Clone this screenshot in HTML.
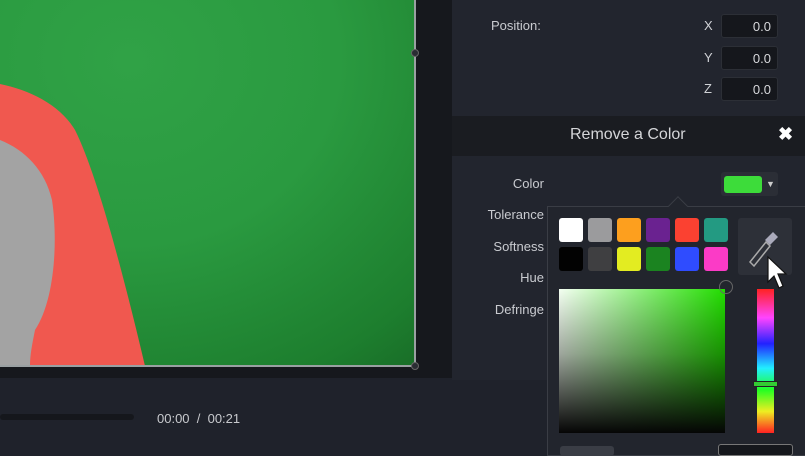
<!DOCTYPE html>
<html><head><style>
body{margin:0;width:805px;height:454px;overflow:hidden;background:#1f222b;font-family:"Liberation Sans",sans-serif;position:relative}
div{position:absolute;box-sizing:border-box}
.lbl{color:#c9cbd0;font-size:13px;text-align:right;width:120px;left:424px}
.inp{left:721px;width:57px;height:24px;background:#15171c;border:1px solid #2c2f36;border-radius:3px;color:#d8d9dc;font-size:13px;text-align:right;padding:4px 6px 0 0}
.ax{left:704px;color:#d0d2d6;font-size:13px}
.sw{width:24px;height:24px;border-radius:3px}
</style></head><body>
<div style="left:0;top:0;width:452px;height:378px;background:#16181d"></div>
<div style="left:0;top:0;width:415px;height:366px;background:radial-gradient(ellipse 520px 460px at 130px 60px,#30a246 0%,#2a9a40 40%,#1d7e2e 75%,#145a20 100%)"></div>
<svg style="position:absolute;left:0;top:0" width="415" height="366"><path d="M0 84 C30 90 60 105 75 130 C95 170 120 260 145 366 L0 366 Z" fill="#f0584f"/><path d="M0 140 C25 150 45 170 52 200 C58 240 55 300 35 330 C32 345 30 355 30 366 L0 366 Z" fill="#a3a3a3"/></svg>
<div style="left:414px;top:0;width:2px;height:367px;background:#9aa0a2"></div>
<div style="left:0;top:365px;width:416px;height:2px;background:#9aa0a2"></div>
<div style="left:411px;top:49px;width:8px;height:8px;border-radius:50%;border:1px solid #666;background:#2a2d33"></div>
<div style="left:411px;top:362px;width:8px;height:8px;border-radius:50%;border:1px solid #666;background:#2a2d33"></div>
<div style="left:0;top:414px;width:134px;height:6px;background:#15171c;border-radius:3px"></div>
<div style="left:157px;top:411px;color:#c8cace;font-size:13px">00:00 &nbsp;/ &nbsp;00:21</div>
<div style="left:452px;top:0;width:353px;height:380px;background:#22252e"></div>
<div style="left:491px;top:18px;color:#c9cbd0;font-size:13px">Position:</div>
<div class="ax" style="top:18px">X</div><div class="inp" style="top:14px">0.0</div>
<div class="ax" style="top:50px">Y</div><div class="inp" style="top:46px">0.0</div>
<div class="ax" style="top:81px">Z</div><div class="inp" style="top:77px">0.0</div>
<div style="left:452px;top:116px;width:353px;height:40px;background:#1a1c21"></div>
<div style="left:570px;top:126px;color:#d4d5d8;font-size:16px">Remove a Color</div>
<div style="left:778px;top:124px;color:#fff;font-size:18px;font-weight:bold">✖</div>
<div class="lbl" style="top:176px">Color</div>
<div class="lbl" style="top:207px">Tolerance</div>
<div class="lbl" style="top:239px">Softness</div>
<div class="lbl" style="top:270px">Hue</div>
<div class="lbl" style="top:302px">Defringe</div>
<div style="left:721px;top:172px;width:57px;height:24px;background:#2b2e36;border-radius:3px"></div>
<div style="left:724px;top:176px;width:38px;height:17px;background:#3ddc3a;border-radius:3px"></div>
<div style="left:766px;top:179px;color:#ccc;font-size:9px">▼</div>
<div style="left:547px;top:206px;width:260px;height:250px;background:#22252d;border:1px solid #3a3d45"></div>
<div style="left:671px;top:199px;width:14px;height:14px;background:#22252d;border-left:1px solid #3a3d45;border-top:1px solid #3a3d45;transform:rotate(45deg)"></div>
<div class="sw" style="left:559px;top:218px;background:#fff"></div>
<div class="sw" style="left:588px;top:218px;background:#9b9b9d"></div>
<div class="sw" style="left:617px;top:218px;background:#fd9f1e"></div>
<div class="sw" style="left:646px;top:218px;background:#6a2290"></div>
<div class="sw" style="left:675px;top:218px;background:#fb4131"></div>
<div class="sw" style="left:704px;top:218px;background:#239a82"></div>
<div class="sw" style="left:559px;top:247px;background:#020202"></div>
<div class="sw" style="left:588px;top:247px;background:#3f3f41"></div>
<div class="sw" style="left:617px;top:247px;background:#e3ec21"></div>
<div class="sw" style="left:646px;top:247px;background:#1b8320"></div>
<div class="sw" style="left:675px;top:247px;background:#2f4cff"></div>
<div class="sw" style="left:704px;top:247px;background:#fb3bc6"></div>
<div style="left:738px;top:218px;width:54px;height:57px;background:#2d3038;border-radius:3px"></div>
<svg style="position:absolute;left:738px;top:218px" width="67" height="80"><path d="M12 44 L28 24 L32 28 L16 48 Z" fill="none" stroke="#aaa" stroke-width="1.5"/><path d="M27 22 L35 14 L40 19 L32 27 Z" fill="#aab"/><path d="M30 39 L30 64 L36 58 L41 70 L45 68 L40 56 L48 56 Z" fill="#fff" stroke="#111" stroke-width="1.2"/></svg>
<div style="left:559px;top:289px;width:166px;height:144px;background:linear-gradient(to bottom,rgba(0,0,0,0) 0%,rgba(0,0,0,0.35) 45%,#050505 100%),linear-gradient(to right,#f4fff2,#22dd00)"></div>
<div style="left:719px;top:280px;width:14px;height:14px;border-radius:50%;border:1.5px solid #666"></div>
<div style="left:757px;top:289px;width:17px;height:144px;background:linear-gradient(to bottom,#f22,#f4f 20%,#22f 38%,#2ef 55%,#2f2 70%,#ee2 85%,#f22)"></div>
<div style="left:753px;top:381px;width:25px;height:6px;background:#3c3;border:1px solid #222"></div>
<div style="left:560px;top:446px;width:54px;height:10px;background:#3a3d45;border-radius:3px"></div>
<div style="left:718px;top:444px;width:75px;height:12px;background:#15171c;border:1px solid #777;border-radius:3px"></div>
</body></html>
